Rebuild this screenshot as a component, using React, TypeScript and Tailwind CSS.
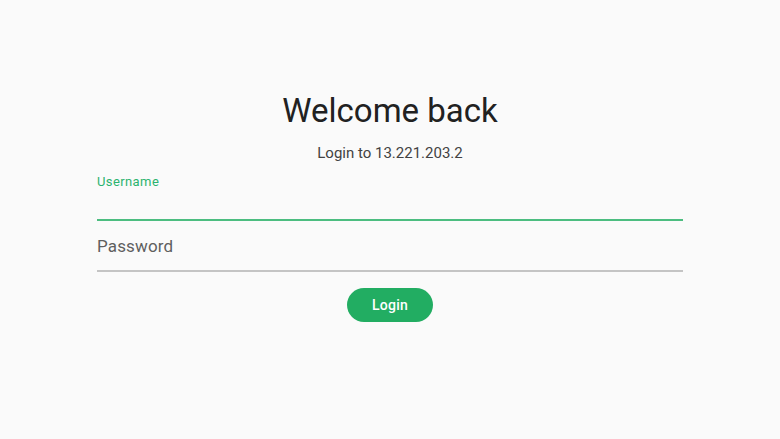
import React from "react";

export default function App() {
  return (
    <div
      className="w-full h-[439px] bg-[#fafafa] flex justify-center"
      style={{ fontFamily: "Roboto, 'Noto Sans', sans-serif" }}
    >
      <div className="w-[586px] flex flex-col items-center pt-[91px]">
        <h1 className="text-[33px] leading-[40px] text-[#212121] font-normal">Welcome back</h1>
        <p className="mt-[12px] text-[15px] leading-[20px] text-[#424242]">Login to 13.221.203.2</p>
        <div className="w-full mt-[11px]">
          <label className="block text-[13px] leading-[16px] tracking-[0.4px] text-[#2bb36e]">
            Username
          </label>
          <input
            className="block w-full h-[31px] bg-transparent outline-none text-[17px] text-[#212121] border-b-2 border-[#4cbd80]"
            type="text"
          />
        </div>
        <input
          className="block w-full mt-[1px] h-[50px] bg-transparent outline-none text-[17px] tracking-[0.15px] text-[#212121] placeholder:text-[#5f5f5f] border-b-2 border-[#c4c4c4]"
          type="password"
          placeholder="Password"
        />
        <button className="mt-[16px] w-[86px] h-[34px] rounded-full bg-[#22ad62] text-white text-[14px] tracking-[0.2px] font-medium">
          Login
        </button>
      </div>
    </div>
  );
}
